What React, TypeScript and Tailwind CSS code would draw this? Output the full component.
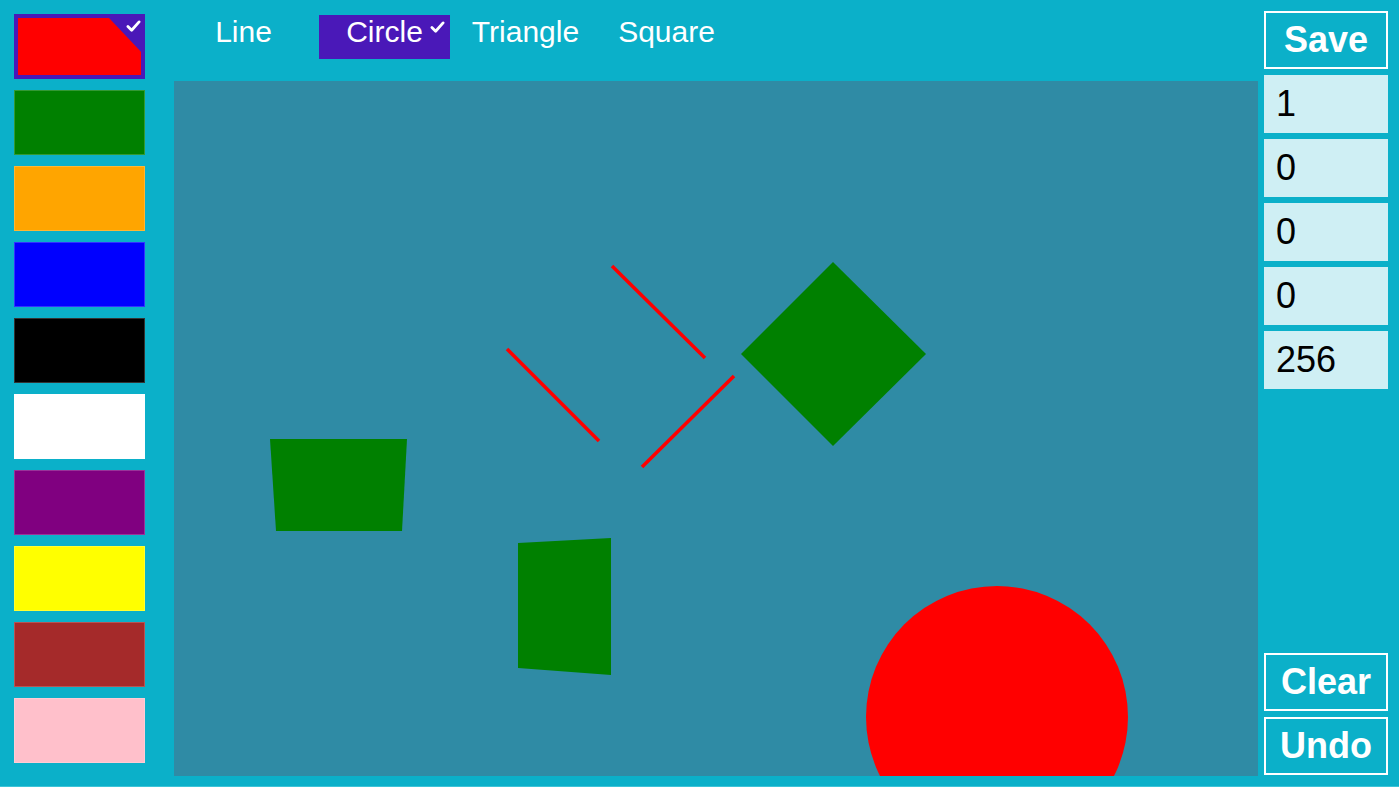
import React from 'react';

const colors = ['red', 'green', 'orange', 'blue', 'black', 'white', 'purple', 'yellow', 'brown', 'pink'];
const tools = ['Line', 'Circle', 'Triangle', 'Square'];
const values = ['1', '0', '0', '0', '256'];

const Check = ({ className }: { className: string }) => (
  <svg viewBox="0 0 16 14" className={className} fill="none" stroke="white" strokeWidth={3} strokeLinecap="round" strokeLinejoin="round">
    <polyline points="2,7 6,11 14,2" />
  </svg>
);

const Swatch = ({ color, selected }: { color: string; selected: boolean }) => {
  if (selected) {
    return (
      <div className="relative h-[65px] w-[131px] bg-[#4a18b8] p-[4px]">
        <div
          className="h-full w-full [clip-path:polygon(0_0,74%_0,100%_59%,100%_100%,0_100%)]"
          style={{ backgroundColor: color }}
        />
        <Check className="absolute right-[4px] top-[6px] h-[13px] w-[15px]" />
      </div>
    );
  }
  return <div className="h-[65px] w-[131px] border border-white/20" style={{ backgroundColor: color }} />;
};

const ToolTab = ({ label, selected }: { label: string; selected: boolean }) => (
  <div
    className={`relative flex h-[44px] w-[131px] justify-center text-[30px] leading-[34px] text-white ${
      selected ? 'bg-[#4a18b8]' : ''
    }`}
  >
    {label}
    {selected && <Check className="absolute right-[5px] top-[6px] h-[13px] w-[15px]" />}
  </div>
);

const Drawing = () => (
  <svg className="absolute inset-0 h-full w-full" viewBox="0 0 1084 695" preserveAspectRatio="none">
    <g stroke="#ff0000" strokeWidth={3.5}>
      <line x1={438} y1={185} x2={531} y2={277} />
      <line x1={333} y1={268} x2={425} y2={360} />
      <line x1={560} y1={295} x2={468} y2={386} />
    </g>
    <polygon points="659,181 752,273 659,365 567,273" fill="#008000" />
    <polygon points="96,358 233,358 228,450 102,450" fill="#008000" />
    <polygon points="344,462 437,457 437,594 344,587" fill="#008000" />
    <circle cx={823} cy={636} r={131} fill="#ff0000" />
  </svg>
);

const OutlineButton = ({ label }: { label: string }) => (
  <button className="flex h-[58px] w-full items-center justify-center border-2 border-white text-[36px] font-bold text-white">
    {label}
  </button>
);

export default function App() {
  return (
    <div className="flex h-[787px] w-[1399px] border-b border-[#3cc4d8] bg-[#0bb0c9] font-['Liberation_Sans',Arial,sans-serif]">
      {/* colour palette */}
      <div className="flex flex-col gap-[11px] pl-[14px] pt-[14px]">
        {colors.map((c, i) => (
          <Swatch key={c} color={c} selected={i === 0} />
        ))}
      </div>

      {/* tools + canvas */}
      <div className="ml-[29px] flex w-[1084px] flex-col pb-[10px]">
        <div className="flex h-[81px] gap-[10px] pl-[4px] pt-[15px]">
          {tools.map((t) => (
            <ToolTab key={t} label={t} selected={t === 'Circle'} />
          ))}
        </div>
        <div className="relative flex-1 overflow-hidden bg-[#2f8ba5]">
          <Drawing />
        </div>
      </div>

      {/* right controls */}
      <div className="ml-[6px] flex w-[124px] flex-col pb-[11px] pt-[11px]">
        <OutlineButton label="Save" />
        <div className="mt-[6px] flex flex-col gap-[6px]">
          {values.map((v, i) => (
            <div key={i} className="flex h-[58px] items-center bg-[#cfeff4] pl-[12px] text-[36px] text-black">
              {v}
            </div>
          ))}
        </div>
        <div className="mt-auto flex flex-col gap-[6px]">
          <OutlineButton label="Clear" />
          <OutlineButton label="Undo" />
        </div>
      </div>
    </div>
  );
}
